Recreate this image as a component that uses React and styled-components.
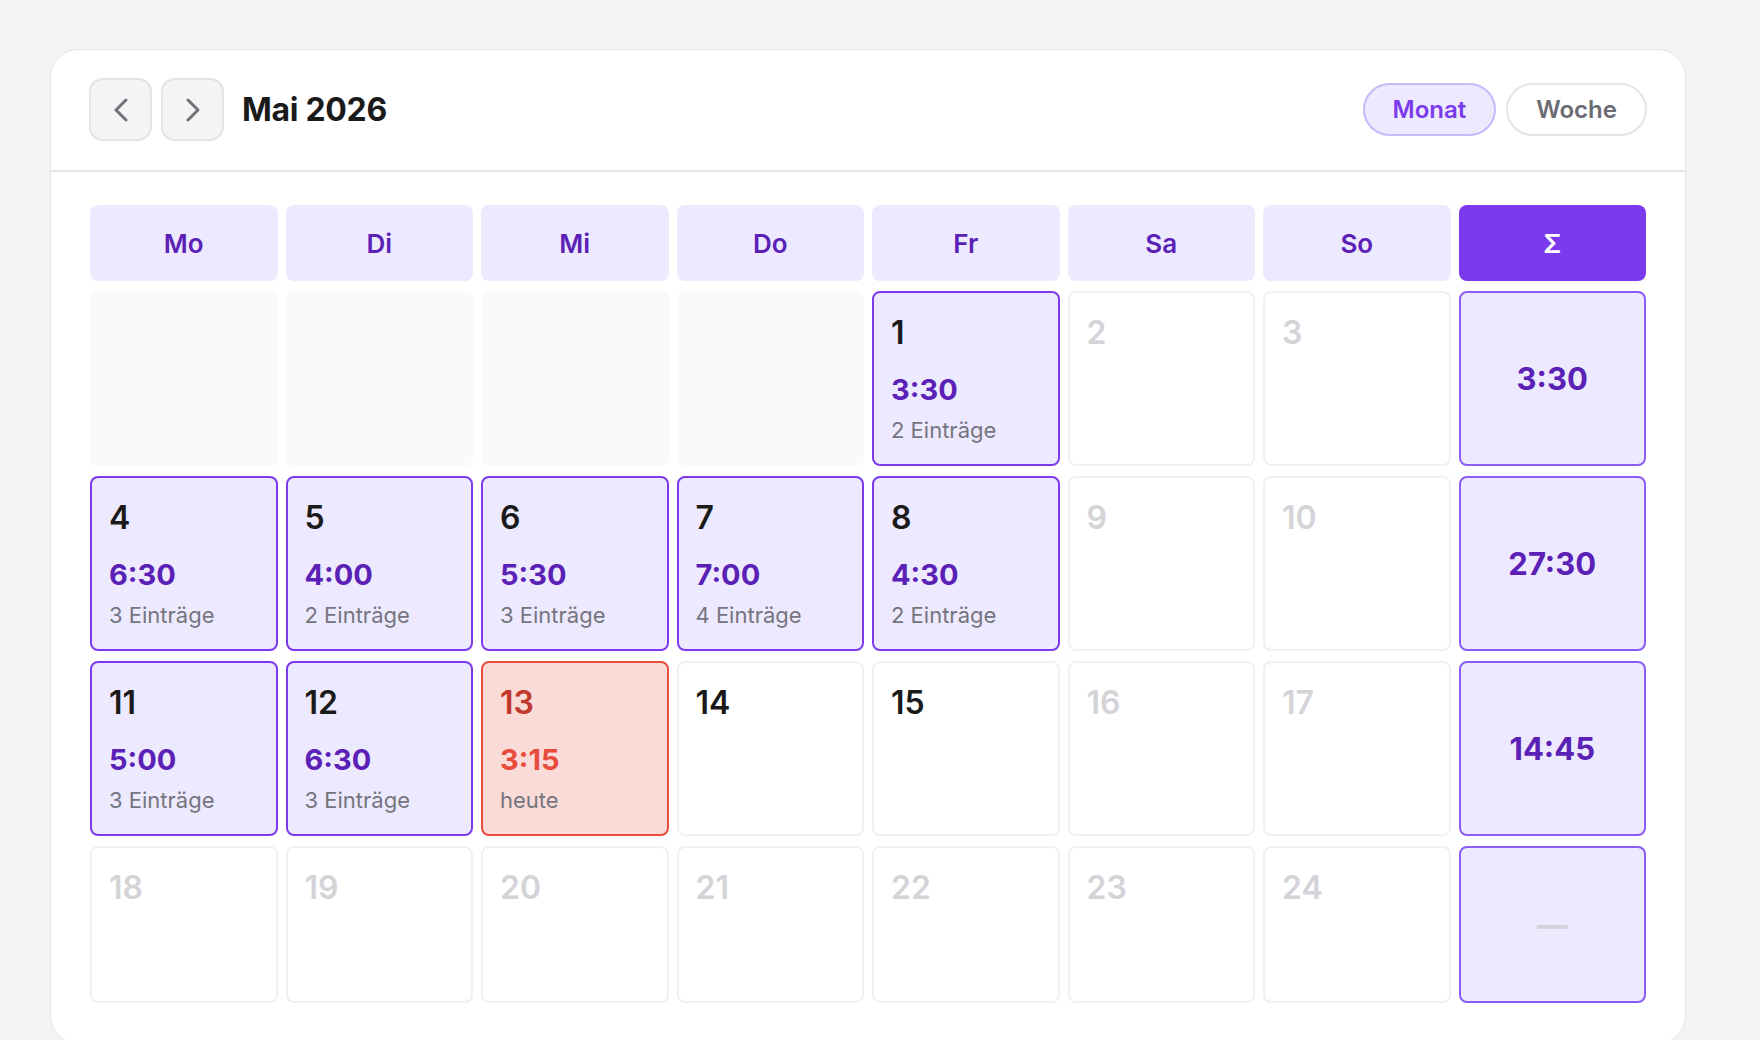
import styled, { createGlobalStyle } from "styled-components"

const GlobalStyle = createGlobalStyle`
  body {
    margin: 0;
    background: #f4f4f4;
    font-family: Inter, "Noto Sans", "Liberation Sans", sans-serif;
    color: #1a1a1a;
  }
`

const Page = styled.div`
  padding: 49px 74px 0 50px;
  height: 1040px;
  box-sizing: border-box;
  overflow: hidden;
`

const Card = styled.div`
  background: #fff;
  border: 1.5px solid #e4e4e4;
  border-radius: 28px;
  box-sizing: border-box;
`

const Header = styled.div`
  display: flex;
  align-items: center;
  justify-content: space-between;
  padding: 28px 38px 29px 38px;
  border-bottom: 2px solid #e6e6e6;
`

const NavGroup = styled.div`
  display: flex;
  align-items: center;
  gap: 9px;
`

const NavButton = styled.button`
  display: flex;
  align-items: center;
  justify-content: center;
  width: 63px;
  height: 63px;
  padding: 0;
  background: #f4f4f5;
  border: 2px solid #e4e4e7;
  border-radius: 14px;
  color: #71717a;
  cursor: pointer;
`

const Title = styled.h1`
  margin: 0 0 0 9px;
  font-size: 32px;
  font-weight: 700;
  letter-spacing: -0.3px;
  color: #1a1a1a;
`

const ViewToggle = styled.div`
  display: flex;
  gap: 10px;
`

const Pill = styled.button`
  height: 53px;
  padding: 0 28px;
  border-radius: 999px;
  font-family: inherit;
  font-size: 24px;
  font-weight: 600;
  border: 2px solid ${p => (p.$active ? "#c9b8fb" : "#e4e4e7")};
  background: ${p => (p.$active ? "#ede9fe" : "#fff")};
  color: ${p => (p.$active ? "#7c3aed" : "#6b6b73")};
  cursor: pointer;
`

const Body = styled.div`
  padding: 33px 39px 40px 39px;
`

const Grid = styled.div`
  display: grid;
  grid-template-columns: repeat(8, 1fr);
  grid-template-rows: 76px;
  grid-auto-rows: minmax(157px, auto);
  gap: 10px 8px;
`

const DayHead = styled.div`
  display: flex;
  align-items: center;
  justify-content: center;
  border-radius: 8px;
  font-size: 26px;
  font-weight: 600;
  background: ${p => (p.$sum ? "#7c3aed" : "#ede9fe")};
  color: ${p => (p.$sum ? "#fff" : "#5b21b6")};
`

const cellTheme = {
  empty: { bg: "#fafafa", border: "#fafafa", num: "#1a1a1a", time: "#5b21b6" },
  muted: { bg: "#fff", border: "#f1f1f2", num: "#d4d4d8", time: "#5b21b6" },
  plain: { bg: "#fff", border: "#f1f1f2", num: "#1a1a1a", time: "#5b21b6" },
  filled: { bg: "#ede9fe", border: "#7c3aed", num: "#1a1a1a", time: "#5b21b6" },
  today: { bg: "#fadbd8", border: "#e74c3c", num: "#c0392b", time: "#e74c3c" },
}

const Cell = styled.div`
  display: flex;
  flex-direction: column;
  align-items: flex-start;
  padding: 21px 17px 20px;
  border-radius: 8px;
  border: 2px solid ${p => cellTheme[p.$kind].border};
  background: ${p => cellTheme[p.$kind].bg};
  box-sizing: border-box;
`

const DayNum = styled.div`
  font-size: 32px;
  line-height: 38px;
  font-weight: 600;
  color: ${p => cellTheme[p.$kind].num};
`

const Time = styled.div`
  margin-top: 21px;
  font-size: 29px;
  line-height: 34px;
  font-weight: 700;
  color: ${p => cellTheme[p.$kind].time};
`

const Entries = styled.div`
  margin-top: 10px;
  font-size: 22px;
  line-height: 27px;
  color: #75757e;
`

const SumCell = styled.div`
  display: flex;
  align-items: center;
  justify-content: center;
  border-radius: 8px;
  border: 2px solid #8b5cf6;
  background: #ede9fe;
  font-size: 31px;
  font-weight: 700;
  color: ${p => (p.$empty ? "#d4d4d8" : "#5b21b6")};
`

const Chevron = ({ dir }) => (
  <svg width="40" height="40" viewBox="0 0 24 24" fill="none" stroke="currentColor" strokeWidth="1.8" strokeLinecap="round" strokeLinejoin="round">
    <path d={dir === "left" ? "M15 18l-6-6 6-6" : "M9 18l6-6-6-6"} />
  </svg>
)

const days = ["Mo", "Di", "Mi", "Do", "Fr", "Sa", "So"]

const weeks = [
  {
    sum: "3:30",
    cells: [
      { kind: "empty" }, { kind: "empty" }, { kind: "empty" }, { kind: "empty" },
      { kind: "filled", day: 1, time: "3:30", note: "2 Einträge" },
      { kind: "muted", day: 2 },
      { kind: "muted", day: 3 },
    ],
  },
  {
    sum: "27:30",
    cells: [
      { kind: "filled", day: 4, time: "6:30", note: "3 Einträge" },
      { kind: "filled", day: 5, time: "4:00", note: "2 Einträge" },
      { kind: "filled", day: 6, time: "5:30", note: "3 Einträge" },
      { kind: "filled", day: 7, time: "7:00", note: "4 Einträge" },
      { kind: "filled", day: 8, time: "4:30", note: "2 Einträge" },
      { kind: "muted", day: 9 },
      { kind: "muted", day: 10 },
    ],
  },
  {
    sum: "14:45",
    cells: [
      { kind: "filled", day: 11, time: "5:00", note: "3 Einträge" },
      { kind: "filled", day: 12, time: "6:30", note: "3 Einträge" },
      { kind: "today", day: 13, time: "3:15", note: "heute" },
      { kind: "plain", day: 14 },
      { kind: "plain", day: 15 },
      { kind: "muted", day: 16 },
      { kind: "muted", day: 17 },
    ],
  },
  {
    sum: null,
    cells: [18, 19, 20, 21, 22, 23, 24].map(d => ({ kind: "muted", day: d })),
  },
]

const App = () => {
  return (
    <Page>
      <GlobalStyle />
      <Card>
        <Header>
          <NavGroup>
            <NavButton aria-label="Vorheriger Monat"><Chevron dir="left" /></NavButton>
            <NavButton aria-label="Nächster Monat"><Chevron dir="right" /></NavButton>
            <Title>Mai 2026</Title>
          </NavGroup>
          <ViewToggle>
            <Pill $active>Monat</Pill>
            <Pill>Woche</Pill>
          </ViewToggle>
        </Header>
        <Body>
          <Grid>
            {days.map(d => <DayHead key={d}>{d}</DayHead>)}
            <DayHead $sum>Σ</DayHead>
            {weeks.map((w, wi) => [
              ...w.cells.map((c, ci) => (
                <Cell key={`${wi}-${ci}`} $kind={c.kind}>
                  {c.day && <DayNum $kind={c.kind}>{c.day}</DayNum>}
                  {c.time && <Time $kind={c.kind}>{c.time}</Time>}
                  {c.note && <Entries>{c.note}</Entries>}
                </Cell>
              )),
              <SumCell key={`sum-${wi}`} $empty={!w.sum}>{w.sum || "—"}</SumCell>,
            ])}
          </Grid>
        </Body>
      </Card>
    </Page>
  )
}

export default App
